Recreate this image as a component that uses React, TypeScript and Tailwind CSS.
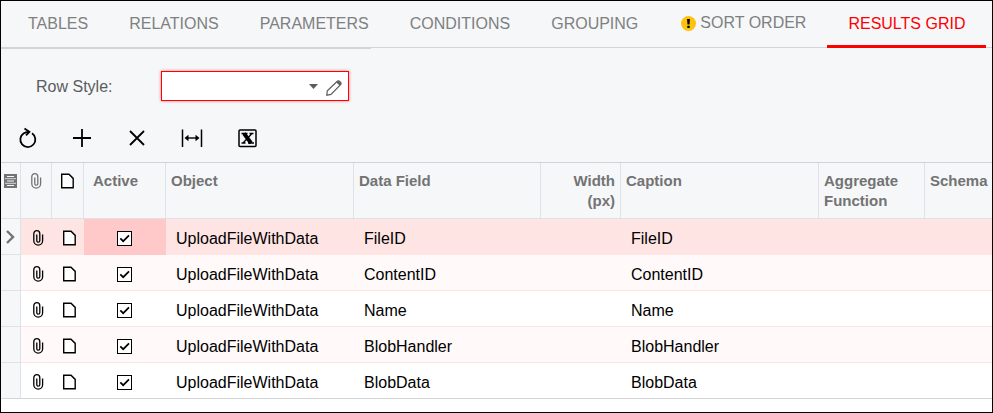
import { useState } from "react";
import type { ReactNode } from "react";

const tabs = ["TABLES", "RELATIONS", "PARAMETERS", "CONDITIONS", "GROUPING", "SORT ORDER", "RESULTS GRID"];

const fields = ["FileID", "ContentID", "Name", "BlobHandler", "BlobData"];

export default function App() {
  const [tab, setTab] = useState("RESULTS GRID");
  const [active, setActive] = useState<boolean[]>(fields.map(() => true));

  function toggle(index: number) {
    setActive(active.map((value, i) => (i === index ? !value : value)));
  }

  return (
    <div className="min-h-screen flex flex-col overflow-hidden border border-black bg-[#f5f7f9] font-['Liberation_Sans',Arial,sans-serif] text-base text-black">
      {/* Tabs */}
      <nav className="flex h-[47px] gap-px border-b border-[#d2d4d7] pl-[7px]">
        {tabs.map((name) => (
          <button
            key={name}
            onClick={() => setTab(name)}
            className={`-mb-px flex shrink-0 items-center border-b-[3px] whitespace-nowrap ${
              tab === name ? "border-[#ff0000] px-[21px] text-[#ff0000]" : "border-transparent px-5 text-[#808080]"
            } ${name === "SORT ORDER" ? "gap-1 pl-[22px]" : "pt-0.5"}`}
          >
            {name === "SORT ORDER" && <WarningIcon />}
            {name}
          </button>
        ))}
      </nav>
      <div className="h-px w-[370px] bg-[#d2d4d7]" />

      {/* Row style */}
      <div className="flex items-center pt-[22px] pl-[35px]">
        <label htmlFor="rowStyle" className="w-[125px] pt-0.5 text-[#5c5c5c]">Row Style:</label>
        <div className="relative flex h-[30px] w-[188px] items-center border border-[#ff0000] bg-white shadow-[0_0_3px_#ff000080]">
          <select id="rowStyle" className="h-full w-[164px] appearance-none bg-transparent px-2 outline-none">
            <option value=""></option>
          </select>
          <svg className="pointer-events-none absolute top-3 left-[147px]" width="9" height="5" viewBox="0 0 9 5">
            <path d="M0 0h9L4.5 5z" fill="#5c5c5c" />
          </svg>
          <button aria-label="Edit" className="pt-1">
            <PencilIcon />
          </button>
        </div>
      </div>

      {/* Toolbar */}
      <div className="flex h-[61px] items-center gap-[31px] pt-3 pl-3.5">
        <ToolButton label="Refresh">
          <path d="M17 7.3a7.5 7.5 0 1 1-8.2-.1Q10.500 6.100 14 6" />
          <path d="m9.500 2.600 4.900 3.300-3.400 3.400" />
        </ToolButton>
        <ToolButton label="Add">
          <path d="M12 3v18M3 12h18" />
        </ToolButton>
        <ToolButton label="Delete">
          <path d="m5 5 14 14M19 5 5 19" />
        </ToolButton>
        <ToolButton label="Fit columns">
          <path d="M2.5 3.5V21M21.5 3.5V21" strokeWidth="1.5" />
          <path d="M6 12h12" strokeWidth="1.4" />
          <path d="m4.500 12 4-3.200v6.400zM19.500 12l-4-3.200v6.400z" fill="currentColor" stroke="none" />
        </ToolButton>
        <ToolButton label="Export to Excel">
          <rect x="4" y="4" width="17" height="16.5" rx="1" strokeWidth="1.5" />
          <path d="m9 7.5 7 9.500" strokeWidth="3.800" />
          <path d="M17 7.500 8 17M6.500 7.500h6M14.500 7.500h4M6.500 17h4M13 17h6" strokeWidth="1.3" />
        </ToolButton>
      </div>

      {/* Grid */}
      <div className="flex-1 overflow-hidden border-t border-[#d0d4da] bg-white">
        <table className="w-[1060px] table-fixed border-separate border-spacing-0">
          <colgroup>
            <col className="w-5" />
            <col className="w-[31px]" />
            <col className="w-8" />
            <col className="w-[82px]" />
            <col className="w-[188px]" />
            <col className="w-[187px]" />
            <col className="w-20" />
            <col className="w-[198px]" />
            <col className="w-[106px]" />
            <col />
          </colgroup>
          <thead>
            <tr className="h-14 bg-[#f5f7f9] text-left align-top text-[15px] leading-5 text-[#737373]">
              <HeaderCell className="pl-[3px]"><FilesIcon /></HeaderCell>
              <HeaderCell className="pl-2"><ClipIcon /></HeaderCell>
              <HeaderCell className="pl-2"><span className="text-black"><NoteIcon /></span></HeaderCell>
              <HeaderCell className="pl-[9px]">Active</HeaderCell>
              <HeaderCell className="pl-[5px]">Object</HeaderCell>
              <HeaderCell className="pl-[5px]">Data Field</HeaderCell>
              <HeaderCell className="pr-[5px] pl-5 text-right">Width (px)</HeaderCell>
              <HeaderCell className="pl-[5px]">Caption</HeaderCell>
              <HeaderCell className="pl-[5px]">Aggregate Function</HeaderCell>
              <HeaderCell className="pl-[5px] whitespace-nowrap">Schema Field</HeaderCell>
            </tr>
          </thead>
          <tbody>
            {fields.map((field, i) => {
              const selected = i === 0;
              const last = i === fields.length - 1;
              const line = last ? "border-[#d2d4d7]" : "border-[#ffe4e4]";
              return (
                <tr key={field} className={`h-9 ${selected ? "bg-[#ffe4e4]" : i % 2 ? "bg-[#fff9f9]" : "bg-white"}`}>
                  <td className={`border-r border-b border-r-[#dfe1e8] bg-[#f5f7f9] pl-[5px] text-[#737373] ${last ? "border-b-[#d2d4d7]" : "border-b-[#dfe1e8]"}`}>
                    {selected && (
                      <svg width="9" height="14" viewBox="0 0 9 14" fill="none" stroke="currentColor" strokeWidth="2.4">
                        <path d="m1 1 6 6-6 6" />
                      </svg>
                    )}
                  </td>
                  <td className={`border-b pt-0.5 pl-2.5 ${line}`}><ClipIcon /></td>
                  <td className={`border-b pt-0.5 pl-2.5 ${line}`}><NoteIcon /></td>
                  <td className={`border-b pt-[3px] ${selected ? "border-[#ffc9c9] bg-[#ffc9c9]" : line}`}>
                    <label className="relative mx-auto flex w-4">
                      <input
                        type="checkbox"
                        aria-label={`${field} active`}
                        checked={active[i]}
                        onChange={() => toggle(i)}
                        className="peer size-[15px] appearance-none border border-black bg-white"
                      />
                      <svg className="pointer-events-none absolute hidden peer-checked:block" width="15" height="15" viewBox="0 0 15 15" fill="none" stroke="currentColor" strokeWidth="1.7">
                        <path d="m3.3 7.3 2.9 2.9L12 4.4" />
                      </svg>
                    </label>
                  </td>
                  <td className={`border-b pt-[5px] pl-2.5 ${line}`}>UploadFileWithData</td>
                  <td className={`border-b pt-[5px] pl-2.5 ${line}`}>{field}</td>
                  <td className={`border-b ${line}`}></td>
                  <td className={`border-b pt-[5px] pl-2.5 ${line}`}>{field}</td>
                  <td className={`border-b ${line}`}></td>
                  <td className={`border-b ${line}`}></td>
                </tr>
              );
            })}
          </tbody>
        </table>
      </div>
    </div>
  );
}

function HeaderCell({ className, children }: { className: string; children: ReactNode }) {
  return <th className={`border-r border-b border-[#dfe1e8] pt-2 ${className}`}>{children}</th>;
}

function ToolButton({ label, children }: { label: string; children: ReactNode }) {
  return (
    <button aria-label={label} title={label}>
      <svg width="24" height="24" viewBox="0 0 24 24" fill="none" stroke="currentColor" strokeWidth="1.8">
        {children}
      </svg>
    </button>
  );
}

function WarningIcon() {
  return (
    <svg width="15" height="15" viewBox="0 0 15 15">
      <circle cx="7.5" cy="7.5" r="7.5" fill="#ffc20e" />
      <path d="M6 3h3l-.5 5.5h-2zM6.3 9.8h2.4V12H6.3z" fill="#000" />
    </svg>
  );
}

function PencilIcon() {
  return (
    <svg width="16" height="16" viewBox="0 0 16 16" fill="none" stroke="#5c5c5c" strokeWidth="1.2">
      <path d="m.8 15.2.5-4.4 10-9.5q1.1-1 2.300 0l1 1q1 1.200 0 2.300L5 14.400z" />
      <path d="m11.3 1.6 3.1 3.1" strokeWidth="2.4" />
    </svg>
  );
}

function ClipIcon() {
  return (
    <svg className="my-0.5" width="14" height="16" viewBox="0 0 14 16" fill="none" stroke="currentColor" strokeWidth="1.3">
      <path d="M11.6 4.500v6.300a4.400 4.400 0 0 1-8.800 0V3.700a3 3 0 0 1 6 0v7a1.500 1.500 0 0 1-3 0V4.500" />
    </svg>
  );
}

function NoteIcon() {
  return (
    <svg className="my-0.5" width="14" height="16" viewBox="0 0 14 16" fill="#fff" stroke="currentColor" strokeWidth="1.4">
      <path d="M1.700 1.200H9l4.200 4.200v9.300H1.700z" />
    </svg>
  );
}

function FilesIcon() {
  return (
    <svg className="my-0.5" width="13" height="15" viewBox="0 0 13 15">
      <path d="M0 1h13v14H0z" fill="currentColor" />
      <path d="M3 3.500h7M3 8h7M3 12.500h7" stroke="#f5f7f9" strokeWidth="1.200" />
      <path d="M1 5.700h11M1 10.300h11" stroke="#d5d7d9" />
    </svg>
  );
}
